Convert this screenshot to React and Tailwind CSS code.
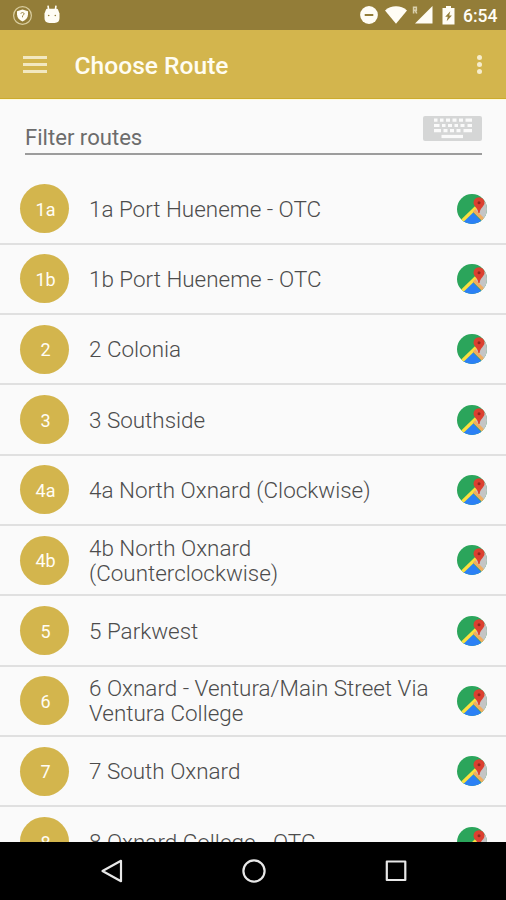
import React from 'react'

const routes = [
  { id: '1a', name: '1a Port Hueneme - OTC' },
  { id: '1b', name: '1b Port Hueneme - OTC' },
  { id: '2', name: '2 Colonia' },
  { id: '3', name: '3 Southside' },
  { id: '4a', name: '4a North Oxnard (Clockwise)' },
  { id: '4b', name: '4b North Oxnard (Counterclockwise)' },
  { id: '5', name: '5 Parkwest' },
  { id: '6', name: '6 Oxnard - Ventura/Main Street Via Ventura College' },
  { id: '7', name: '7 South Oxnard' },
  { id: '8', name: '8 Oxnard College - OTC' }
]

function StatusBar() {
  return (
    <div className="flex h-[30px] flex-none items-center bg-[#937d38] pl-3 pr-[9px] text-[#fffdf5]">
      <svg className="h-[21px] w-[21px]" viewBox="0 0 21 21" fill="none">
        <circle cx="10.5" cy="10.5" r="8.9" stroke="#d9cd9f" strokeWidth="1.2" />
        <path d="M10.5 4.6 16 6.2v3.4c0 3.2-2.4 5.5-5.5 7-3.1-1.5-5.5-3.8-5.5-7V6.2Z" fill="currentColor" />
        <path d="M8.6 8.4q1.9-1.8 3.6 0-.1 1.5-1.7 2.4v1.5" stroke="#937d38" strokeWidth="0.9" />
      </svg>
      <svg className="ml-[11px] h-[20px] w-[16px]" viewBox="0 0 16 20">
        <path d="M4 .6 4.6 4.6M12 .6 11.4 4.6" stroke="currentColor" strokeWidth="1.6" />
        <path d="M3.2 3.8h9.6q1 0 1.400 1.100l1.300 3.700v4.500q0 4.900-4.900 4.900H5.400Q.5 18 .5 13.100V8.600l1.300-3.700Q2.200 3.800 3.200 3.800Z" fill="currentColor" />
        <circle cx="4.7" cy="10.5" r="0.8" fill="#937d38" />
        <circle cx="11.3" cy="10.5" r="0.8" fill="#937d38" />
      </svg>
      <svg className="ml-auto h-[18px] w-[18px]" viewBox="0 0 18 18">
        <circle cx="9" cy="9" r="8.9" fill="currentColor" />
        <path d="M4.7 9h8.6" stroke="#937d38" strokeWidth="2" />
      </svg>
      <svg className="ml-[7px] h-[18px] w-[22px]" viewBox="0 0 22 18">
        <path d="M0 4.4C6-1 16-1 22 4.4L11 17.8Z" fill="currentColor" />
      </svg>
      <svg className="ml-[5px] h-[18px] w-[21px]" viewBox="0 0 21 18">
        <path d="M20.5 0v17.5H3Z" fill="currentColor" />
        <path d="M1.6 7.500V1.200h2.700v3H1.600M3.200 4.200 4.700 7.500" fill="none" stroke="#d9d0ad" strokeWidth="1.600" />
      </svg>
      <svg className="ml-[9px] h-[19px] w-[13px]" viewBox="0 0 13 19">
        <path d="M4 0h5v2h3.5v16.5H.5V2H4Z" fill="currentColor" />
        <path d="M8.3 5.2 3.2 10.8h2.6l-1.1 4.5 5.2-5.9H7.2Z" fill="#937d38" />
      </svg>
      <span className="ml-[8px] w-[34px] whitespace-nowrap pt-[3px] text-[17.5px] font-medium leading-none">6:54</span>
    </div>
  )
}

function AppBar() {
  return (
    <header className="flex h-[69px] flex-none items-center border-b border-[#cdab2c] bg-[#d3b54d] pl-[23px] pr-6">
      <button className="flex w-6 flex-col gap-1" aria-label="Open menu">
        <span className="h-[3px] w-6 bg-[#f2e8c0]" />
        <span className="h-[3px] w-6 bg-[#f2e8c0]" />
        <span className="h-[3px] w-6 bg-[#f2e8c0]" />
      </button>
      <h1 className="ml-[27.5px] mt-[5px] text-[24.6px] font-medium leading-none text-[#fffdf2]">Choose Route</h1>
      <button className="ml-auto flex flex-col gap-[2px]" aria-label="More options">
        <span className="h-[5px] w-[5px] rounded-full bg-[#f6edcd]" />
        <span className="h-[5px] w-[5px] rounded-full bg-[#f6edcd]" />
        <span className="h-[5px] w-[5px] rounded-full bg-[#f6edcd]" />
      </button>
    </header>
  )
}

function KeyboardIcon() {
  return (
    <svg className="h-[25px] w-[59px]" viewBox="0 0 59 25">
      <rect width="59" height="25" rx="2" fill="#d5d6d6" />
      <g fill="none" stroke="#fafafa" strokeWidth="3.2">
        <path d="M11 4.2h3.5M17 4.2h3.5M23 4.2h4M29.5 4.2h4M36 4.2h4M42.5 4.2h6.5" />
        <path d="M11 9.5h5.5M19 9.5h3.5M25 9.5h4M31.5 9.5h3.5M37.5 9.5h4M44.5 9.5H49" />
        <path d="M11 14.7h7M20.5 14.7h4M27 14.7h4M33.5 14.7h4M40.5 14.7H49" />
        <path d="M18.5 20.5H40" />
      </g>
    </svg>
  )
}

function MapIcon() {
  return (
    <svg className="h-[30px] w-[30px] flex-none" viewBox="0 0 30 30">
      <defs>
        <clipPath id="map-disc">
          <circle cx="15" cy="15" r="15" />
        </clipPath>
      </defs>
      <g clipPath="url(#map-disc)">
        <path d="M0 0h30v30H0Z" fill="#2ba55b" />
        <path d="M18 13 30 6v24l-11-13Z" fill="#c4c5c5" />
        <path d="M15.5 18 28 31H3Z" fill="#2b80f5" />
        <path d="M4 28 19 13.5" stroke="#fbe03f" strokeWidth="3.2" />
        <path d="m17 16.5 10 10" stroke="#f0ad62" strokeWidth="3.4" />
      </g>
      <path d="M22 3.2a5.5 5.5 0 0 1 5.500 5.500c0 3.500-4.200 4.800-4.900 10.200h-1.200c-.7-5.400-4.900-6.700-4.900-10.200A5.500 5.500 0 0 1 22 3.200Z" fill="#dc4030" />
      <circle cx="22" cy="8.7" r="1.5" fill="#8c2820" />
    </svg>
  )
}

function RouteRow({ route }) {
  return (
    <li className="flex h-[70.35px] flex-none items-center border-b-2 border-[#e0e0e0] pl-5 pr-[19px]">
      <span className="flex h-[49px] w-[49px] flex-none items-center justify-center rounded-full bg-[#d3b54d] pl-[2px] pt-px text-[18px] text-[#fffdf5]">
        {route.id}
      </span>
      <span className="ml-5 w-[350px] pt-px text-[22.45px] font-light leading-[25px] text-[#4c4c4c]">{route.name}</span>
      <span className="ml-auto">
        <MapIcon />
      </span>
    </li>
  )
}

function NavigationBar() {
  return (
    <nav className="flex h-[58px] flex-none items-center justify-between bg-black pl-[100px] pr-[98px]">
      <svg className="h-6 w-6" viewBox="0 0 24 24" fill="none" stroke="#e8e8e8" strokeWidth="2.2" strokeLinejoin="round">
        <path d="M21 1.8v20.4L2.5 12Z" />
      </svg>
      <svg className="h-6 w-6" viewBox="0 0 24 24" fill="none" stroke="#e8e8e8" strokeWidth="2.2">
        <circle cx="12" cy="12" r="10.6" />
      </svg>
      <svg className="h-6 w-6" viewBox="0 0 24 24" fill="none" stroke="#e8e8e8" strokeWidth="2.2" strokeLinejoin="round">
        <rect x="2.8" y="2.5" width="18.5" height="18.5" />
      </svg>
    </nav>
  )
}

export default function App() {
  return (
    <div className="flex h-[900px] w-[506px] flex-col overflow-hidden bg-[#fafafa] font-['Roboto',sans-serif]">
      <StatusBar />
      <AppBar />
      <main className="flex min-h-0 flex-1 flex-col overflow-hidden border-t border-[#fffbdc]">
        <div className="ml-[25px] mr-6 flex h-[55px] flex-none items-start justify-between border-b-2 border-[#9c9c9c] pt-4">
          <input
            className="mt-[7px] w-[300px] bg-transparent text-[22.1px] leading-[28px] outline-none placeholder:text-[#6c6c6c]"
            placeholder="Filter routes"
            aria-label="Filter routes"
          />
          <KeyboardIcon />
        </div>
        <ul className="mt-[19.4px] flex flex-col">
          {routes.map((route) => (
            <RouteRow key={route.id} route={route} />
          ))}
        </ul>
      </main>
      <NavigationBar />
    </div>
  )
}
